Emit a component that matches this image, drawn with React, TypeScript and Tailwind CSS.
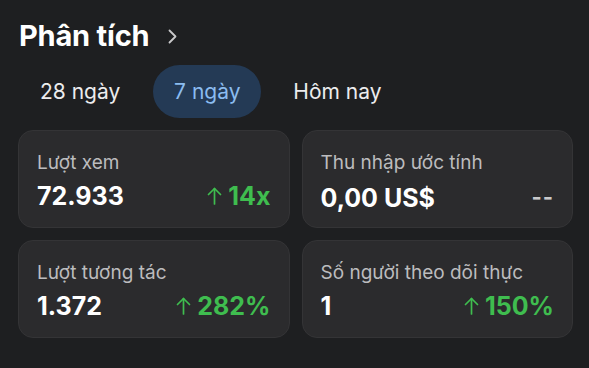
const stats = [
  { label: 'Lượt xem', value: '72.933', change: '14x' },
  { label: 'Thu nhập ước tính', value: '0,00 US$', change: null },
  { label: 'Lượt tương tác', value: '1.372', change: '282%' },
  { label: 'Số người theo dõi thực', value: '1', change: '150%' },
];

function UpArrow() {
  return (
    <svg width="15" height="18" viewBox="0 0 15 18" fill="none" stroke="currentColor" strokeWidth="1.7" strokeLinecap="round" strokeLinejoin="round" className="mr-[6px]">
      <path d="M7.5 17V1.5" />
      <path d="M1.5 7.5L7.5 1.5L13.5 7.5" />
    </svg>
  );
}

export default function App() {
  return (
    <div
      className="w-[589px] h-[368px] bg-[#1e1f21] text-white overflow-hidden pl-[18px] pr-[16px]"
      style={{ fontFamily: 'Inter, "Noto Sans", sans-serif' }}
    >
      {/* tiêu đề */}
      <div className="flex items-center pt-[17px] pl-[1px]">
        <h1 className="text-[29px] font-bold leading-[38px] tracking-[-0.2px]">Phân tích</h1>
        <svg width="9" height="15" viewBox="0 0 9 15" fill="none" stroke="#c9c9cb" strokeWidth="1.8" strokeLinecap="round" strokeLinejoin="round" className="ml-[19px] mt-[1px]">
          <path d="M1.5 1.5L7.5 7.5L1.5 13.5" />
        </svg>
      </div>

      {/* tab */}
      <div className="flex items-center mt-[10px] h-[53px]">
        <div className="px-[22px] text-[21px] text-[#ececee]">28 ngày</div>
        <div className="ml-[11px] h-[53px] w-[108px] rounded-full bg-[#243a55] flex items-center justify-center text-[21px] text-[#8bbcf0]">
          7 ngày
        </div>
        <div className="ml-[32px] text-[21px] text-[#ececee]">Hôm nay</div>
      </div>

      {/* thẻ số liệu */}
      <div className="grid grid-cols-2 gap-[12px] mt-[12px]">
        {stats.map(s => (
          <div
            key={s.label}
            className="h-[98px] rounded-[15px] bg-[#2b2b2d] border border-[#343436] pl-[18px] pr-[18px] pt-[19px]"
          >
            <div className="text-[19px] leading-[26px] text-[#bcbcbe]">{s.label}</div>
            <div className="flex items-center justify-between mt-[5px]">
              <div className="text-[25px] font-bold leading-[30px] text-white">{s.value}</div>
              {s.change ? (
                <div className="flex items-center text-[#3fbd4f]">
                  <UpArrow />
                  <span className="text-[25px] font-bold leading-[30px]">{s.change}</span>
                </div>
              ) : (
                <div className="text-[22px] font-bold text-[#c9c9cb] tracking-[1px]">--</div>
              )}
            </div>
          </div>
        ))}
      </div>
    </div>
  );
}
